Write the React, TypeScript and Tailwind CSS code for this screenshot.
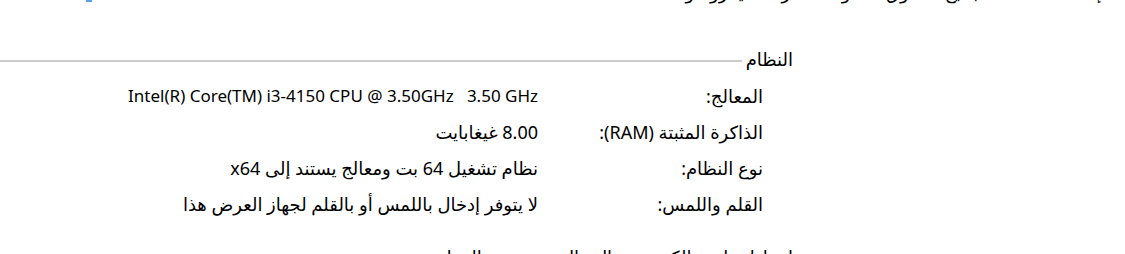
const rows = [
  { label: 'المعالج:', value: 'Intel(R) Core(TM) i3-4150 CPU @ 3.50GHz   3.50 GHz', ltr: true },
  { label: 'الذاكرة المثبتة (RAM):', value: '8.00 غيغابايت', ltr: false },
  { label: 'نوع النظام:', value: 'نظام تشغيل 64 بت ومعالج يستند إلى x64', ltr: false },
  { label: 'القلم واللمس:', value: 'لا يتوفر إدخال باللمس أو بالقلم لجهاز العرض هذا', ltr: false },
];

export default function App() {
  return (
    <div
      dir="rtl"
      className="relative h-[254px] w-[1125px] overflow-hidden bg-white text-[18px] text-black"
      style={{ fontFamily: '"Segoe UI", "Noto Sans", "DejaVu Sans", sans-serif' }}
    >
      {/* clipped row from the section above */}
      <div className="relative h-[5px] overflow-hidden">
        <div className="-mt-[19px] flex items-center pr-[12px] leading-[22px]">
          <span className="ml-[2px] text-[12px] text-[#6b6b6b]">◆</span>
          <span className="ml-[115px]">إ</span>
          <span>جميع الحقوق محفوظة لشركة مايكروسوفت</span>
        </div>
        <div className="absolute left-[86px] top-0 h-[2px] w-[6px] bg-[#5aa0e6]" />
      </div>

      <div className="pr-[332px] pt-[43px]">
        <div className="flex items-center gap-[4px] leading-[22px]">
          <span>النظام</span>
          <div className="-ml-[332px] mt-[3px] h-[2px] flex-1 bg-[#cccccc]" />
        </div>

        <div className="mt-[8px] pr-[30px]">
          {rows.map((r) => (
            <div key={r.label} className="flex h-[36px] items-center leading-[22px]">
              <div className="w-[225px] shrink-0">{r.label}</div>
              <div dir={r.ltr ? 'ltr' : 'rtl'} className={r.ltr ? 'whitespace-pre text-[17px]' : 'whitespace-pre'}>
                {r.value}
              </div>
            </div>
          ))}
        </div>

        <div className="mt-[24px] leading-[22px]">إعدادات اسم الكمبيوتر والمجال ومجموعة العمل</div>
      </div>
    </div>
  );
}
